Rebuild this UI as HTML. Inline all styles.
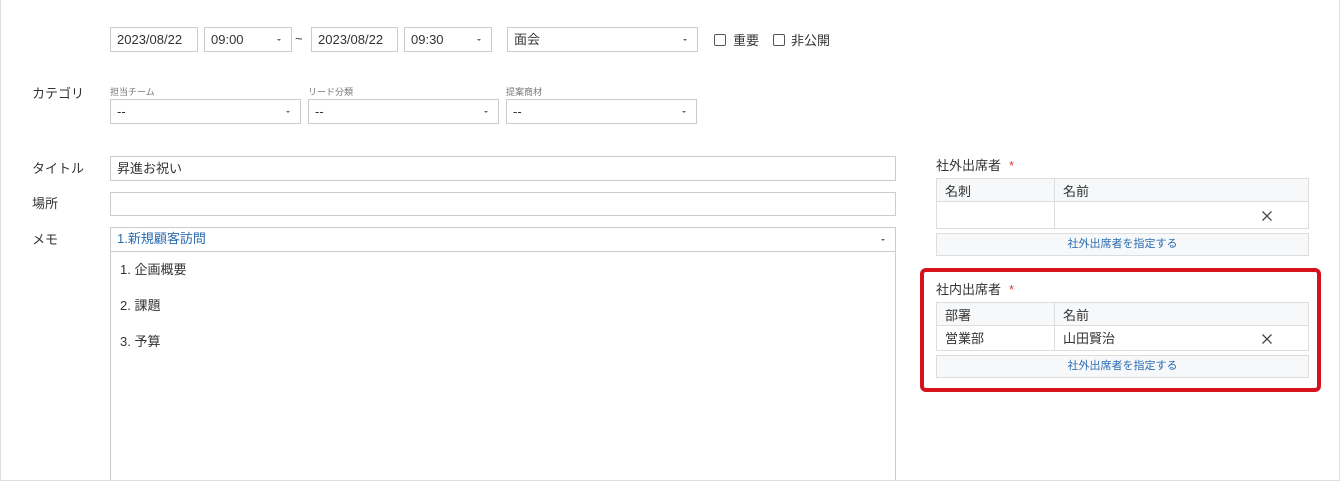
<!DOCTYPE html>
<html><head><meta charset="utf-8"><style>
*{box-sizing:border-box;margin:0;padding:0}
html,body{width:1340px;height:481px;overflow:hidden}
body{background:#fff;font-family:"Liberation Sans","Noto Sans CJK JP",sans-serif;font-size:13px;color:#333;position:relative}
.frame{position:absolute;left:0;top:0;width:1340px;height:481px;border:1px solid #ddd;border-top:none}
.a{position:absolute}
.box{position:absolute;border:1px solid #ccc;background:#fff;height:25px;line-height:23px;padding-left:6px;white-space:nowrap}
.dd:after{content:"";position:absolute;right:10px;top:11px;border-left:2px solid transparent;border-right:2px solid transparent;border-top:2px solid #666}
.lbl{position:absolute;font-size:13px;color:#333}
.sm{position:absolute;font-size:9px;color:#777}
.cb{position:absolute;width:12px;height:12px;border:1px solid #555;border-radius:2px;top:34px}
.tbl{position:absolute;border:1px solid #ddd;left:936px;width:373px}
.tbl .h{height:23px;background:#f7f8fa;border-bottom:1px solid #ddd;position:relative}
.tbl .r{position:relative}
.tbl .c1{position:absolute;left:8px;top:2px}
.tbl .c2{position:absolute;left:126px;top:2px}
.tbl .v{position:absolute;left:117px;top:0;bottom:0;border-left:1px solid #ddd}
.x{position:absolute;left:325px;width:10px;height:10px}
.btn{position:absolute;left:936px;width:373px;border:1px solid #ddd;background:#f7f8fa;color:#2a6bb0;text-align:center;font-size:11px;height:23px;line-height:21px}
.req{color:#e03a3a;margin-left:8px}
</style></head><body>
<div class="frame"></div>
<div class="box" style="left:110px;top:27px;width:88px">2023/08/22</div>
<div class="box dd" style="left:204px;top:27px;width:88px">09:00</div>
<div class="a" style="left:295px;top:31px">~</div>
<div class="box" style="left:311px;top:27px;width:87px">2023/08/22</div>
<div class="box dd" style="left:404px;top:27px;width:88px">09:30</div>
<div class="box dd" style="left:507px;top:27px;width:191px">面会</div>
<div class="cb" style="left:714px"></div><div class="lbl" style="left:733px;top:30px">重要</div>
<div class="cb" style="left:773px"></div><div class="lbl" style="left:791px;top:30px">非公開</div>

<div class="lbl" style="left:32px;top:83px">カテゴリ</div>
<div class="sm" style="left:110px;top:85px">担当チーム</div>
<div class="sm" style="left:308px;top:85px">リード分類</div>
<div class="sm" style="left:506px;top:85px">提案商材</div>
<div class="box dd" style="left:110px;top:99px;width:191px">--</div>
<div class="box dd" style="left:308px;top:99px;width:191px">--</div>
<div class="box dd" style="left:506px;top:99px;width:191px">--</div>

<div class="lbl" style="left:32px;top:158px">タイトル</div>
<div class="box" style="left:110px;top:156px;width:786px">昇進お祝い</div>
<div class="lbl" style="left:32px;top:193px">場所</div>
<div class="box" style="left:110px;top:192px;width:786px;height:24px"></div>
<div class="lbl" style="left:32px;top:229px">メモ</div>
<div class="box dd" style="left:110px;top:227px;width:786px;height:25px;color:#2a6bb0;line-height:22px">1.新規顧客訪問</div>
<div class="a" style="left:110px;top:251px;width:786px;height:229px;border-left:1px solid #ccc;border-right:1px solid #ccc"></div>
<div class="lbl" style="left:120px;top:259px">1. 企画概要</div>
<div class="lbl" style="left:120px;top:295px">2. 課題</div>
<div class="lbl" style="left:120px;top:331px">3. 予算</div>

<div class="lbl" style="left:936px;top:155px">社外出席者<span class="req">*</span></div>
<div class="tbl" style="top:178px;height:51px">
<div class="h"><span class="c1">名刺</span><span class="c2">名前</span><div class="v"></div></div>
<div class="r" style="height:27px"><div class="v"></div><svg class="x" style="top:9px" viewBox="0 0 10 10"><path d="M0.5 0.5L9.5 9.5M9.5 0.5L0.5 9.5" stroke="#444" stroke-width="1.3"/></svg></div>
</div>
<div class="btn" style="top:233px">社外出席者を指定する</div>

<div class="a" style="left:920px;top:268px;width:401px;height:124px;border:4px solid #d7121d;border-radius:6px"></div>
<div class="lbl" style="left:936px;top:279px">社内出席者<span class="req">*</span></div>
<div class="tbl" style="top:302px;height:49px">
<div class="h"><span class="c1">部署</span><span class="c2">名前</span><div class="v"></div></div>
<div class="r" style="height:25px"><div class="v"></div><span class="c1">営業部</span><span class="c2">山田賢治</span><svg class="x" style="top:8px" viewBox="0 0 10 10"><path d="M0.5 0.5L9.5 9.5M9.5 0.5L0.5 9.5" stroke="#444" stroke-width="1.3"/></svg></div>
</div>
<div class="btn" style="top:355px">社外出席者を指定する</div>
</body></html>
